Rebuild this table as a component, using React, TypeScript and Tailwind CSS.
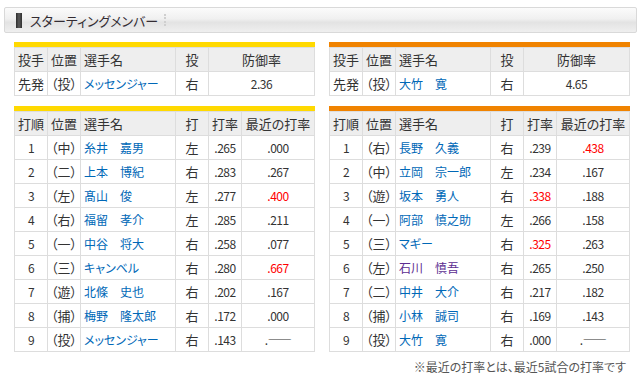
type Pitcher = { role: string; pos: string; name: string; hand: string; era: string };
type Batter = {
  order: number;
  pos: string;
  name: string;
  hand: string;
  avg: string;
  recent: string;
  avgRed?: boolean;
  recentRed?: boolean;
  visited?: boolean;
};

const tigersPitcher: Pitcher = { role: '先発', pos: '（投）', name: 'メッセンジャー', hand: '右', era: '2.36' };
const giantsPitcher: Pitcher = { role: '先発', pos: '（投）', name: '大竹　寛', hand: '右', era: '4.65' };

const tigers: Batter[] = [
  { order: 1, pos: '（中）', name: '糸井　嘉男', hand: '左', avg: '.265', recent: '.000' },
  { order: 2, pos: '（二）', name: '上本　博紀', hand: '右', avg: '.283', recent: '.267' },
  { order: 3, pos: '（左）', name: '髙山　俊', hand: '左', avg: '.277', recent: '.400', recentRed: true },
  { order: 4, pos: '（右）', name: '福留　孝介', hand: '左', avg: '.285', recent: '.211' },
  { order: 5, pos: '（一）', name: '中谷　将大', hand: '右', avg: '.258', recent: '.077' },
  { order: 6, pos: '（三）', name: 'キャンベル', hand: '右', avg: '.280', recent: '.667', recentRed: true },
  { order: 7, pos: '（遊）', name: '北條　史也', hand: '右', avg: '.202', recent: '.167' },
  { order: 8, pos: '（捕）', name: '梅野　隆太郎', hand: '右', avg: '.172', recent: '.000' },
  { order: 9, pos: '（投）', name: 'メッセンジャー', hand: '右', avg: '.143', recent: '.――' },
];

const giants: Batter[] = [
  { order: 1, pos: '（右）', name: '長野　久義', hand: '右', avg: '.239', recent: '.438', recentRed: true },
  { order: 2, pos: '（中）', name: '立岡　宗一郎', hand: '左', avg: '.234', recent: '.167' },
  { order: 3, pos: '（遊）', name: '坂本　勇人', hand: '右', avg: '.338', recent: '.188', avgRed: true },
  { order: 4, pos: '（一）', name: '阿部　慎之助', hand: '左', avg: '.266', recent: '.158' },
  { order: 5, pos: '（三）', name: 'マギー', hand: '右', avg: '.325', recent: '.263', avgRed: true },
  { order: 6, pos: '（左）', name: '石川　慎吾', hand: '右', avg: '.265', recent: '.250', visited: true },
  { order: 7, pos: '（二）', name: '中井　大介', hand: '右', avg: '.217', recent: '.182' },
  { order: 8, pos: '（捕）', name: '小林　誠司', hand: '右', avg: '.169', recent: '.143' },
  { order: 9, pos: '（投）', name: '大竹　寛', hand: '右', avg: '.000', recent: '.――' },
];

const th = 'h-[24px] border border-[#dddddd] bg-[#eeeeee] px-[3px] font-normal';
const td = 'h-[24px] border border-[#dddddd] px-[3px]';
const num = 'text-[12px] tracking-[-0.5px]';

function PitcherTable({ p, bar }: { p: Pitcher; bar: string }) {
  return (
    <div>
      <div className={`h-[5px] ${bar}`} />
      <table className="w-[300px] table-fixed border-collapse text-[13px]">
        <colgroup>
          <col className="w-[33px]" />
          <col className="w-[33px]" />
          <col className="w-[95px]" />
          <col className="w-[33px]" />
          <col className="w-[106px]" />
        </colgroup>
        <thead>
          <tr>
            <th className={`${th} text-left`}>投手</th>
            <th className={`${th} text-left`}>位置</th>
            <th className={`${th} text-left`}>選手名</th>
            <th className={`${th} text-center`}>投</th>
            <th className={`${th} text-center`}>防御率</th>
          </tr>
        </thead>
        <tbody>
          <tr>
            <td className={td}>{p.role}</td>
            <td className={td}>{p.pos}</td>
            <td className={`${td} text-[12px] text-[#0068b7]`}>{p.name}</td>
            <td className={`${td} text-center`}>{p.hand}</td>
            <td className={`${td} text-center ${num}`}>{p.era}</td>
          </tr>
        </tbody>
      </table>
    </div>
  );
}

function LineupTable({ rows, bar }: { rows: Batter[]; bar: string }) {
  return (
    <div>
      <div className={`h-[5px] ${bar}`} />
      <table className="w-[300px] table-fixed border-collapse text-[13px]">
        <colgroup>
          <col className="w-[33px]" />
          <col className="w-[33px]" />
          <col className="w-[95px]" />
          <col className="w-[33px]" />
          <col className="w-[33px]" />
          <col className="w-[73px]" />
        </colgroup>
        <thead>
          <tr>
            <th className={`${th} text-left`}>打順</th>
            <th className={`${th} text-left`}>位置</th>
            <th className={`${th} text-left`}>選手名</th>
            <th className={`${th} text-center`}>打</th>
            <th className={`${th} text-center`}>打率</th>
            <th className={`${th} text-center`}>最近の打率</th>
          </tr>
        </thead>
        <tbody>
          {rows.map((r) => (
            <tr key={r.order}>
              <td className={`${td} text-center ${num}`}>{r.order}</td>
              <td className={td}>{r.pos}</td>
              <td className={`${td} text-[12px] ${r.visited ? 'text-[#5c2d91]' : 'text-[#0068b7]'}`}>{r.name}</td>
              <td className={`${td} text-center`}>{r.hand}</td>
              <td className={`${td} text-center ${num} ${r.avgRed ? 'text-[#ff0000]' : ''}`}>{r.avg}</td>
              <td className={`${td} text-center ${num} ${r.recentRed ? 'text-[#ff0000]' : ''}`}>{r.recent}</td>
            </tr>
          ))}
        </tbody>
      </table>
    </div>
  );
}

export default function App() {
  return (
    <div className="h-[387px] w-[641px] bg-white pt-[7px] font-['Noto_Sans_CJK_JP','Noto_Sans',sans-serif] text-[#333333] [font-feature-settings:'palt']">
      {/* section heading */}
      <div className="ml-[4px] flex h-[26px] w-[633px] items-center rounded-[2px] border border-[#d9d9d9] bg-[linear-gradient(#fbfbfb,#f0f0f0_45%,#e3e3e3_60%,#efefef)] pl-[11px]">
        <span className="h-[15px] w-[6px] bg-[linear-gradient(to_right,#2e2e2e,#5a5a5a,#2e2e2e)]" />
        <span className="ml-[8px] text-[13px] leading-none text-[#332c33]">スターティングメンバー</span>
        <span className="ml-[6px] h-[12px] border-l-2 border-dotted border-[#cfcfcf]" />
      </div>

      <div className="mt-[9px] flex gap-[14px] pl-[14px]">
        <div className="flex flex-col gap-[10px]">
          <PitcherTable p={tigersPitcher} bar="bg-[#ffd900]" />
          <LineupTable rows={tigers} bar="bg-[#ffd900]" />
        </div>
        <div className="flex flex-col gap-[10px]">
          <PitcherTable p={giantsPitcher} bar="bg-[#f08300]" />
          <LineupTable rows={giants} bar="bg-[#f08300]" />
        </div>
      </div>

      <p className="mt-[6px] pr-[15px] text-right text-[12px] leading-[18px] text-[#555555]">
        ※最近の打率とは、最近5試合の打率です
      </p>
    </div>
  );
}
